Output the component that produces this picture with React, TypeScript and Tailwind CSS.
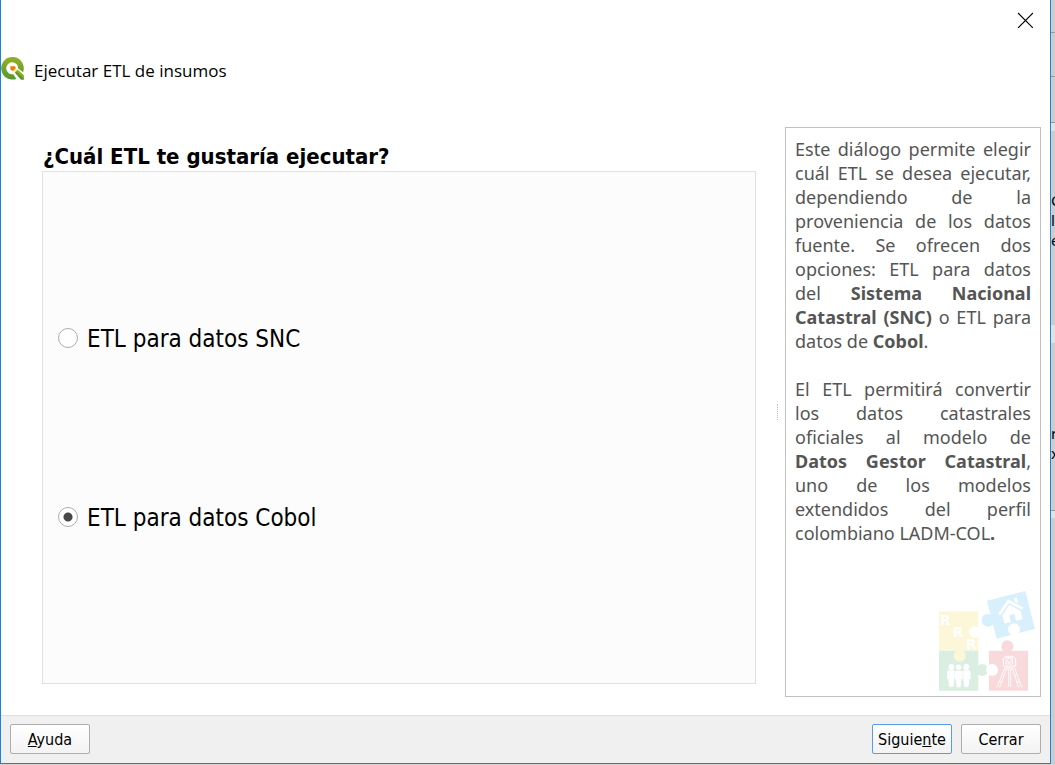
import { useState } from "react";

const QgisLogo = () => (
  <svg viewBox="0 0 24 24" className="h-6 w-6 shrink-0" aria-hidden="true">
    <defs>
      <linearGradient id="ring" x1="0" y1="0" x2="0" y2="1">
        <stop offset="0" stopColor="#93b023" />
        <stop offset="1" stopColor="#589632" />
      </linearGradient>
    </defs>
    <path
      fill="url(#ring)"
      d="M15.4 21.900A11.300 11.300 0 1 1 22.100 15.200L17.200 11.600A6 6 0 1 0 12.400 17.200Z"
    />
    <path fill="#f5ec8a" d="M11.8 13.800L14.600 11L17.400 13.600L14.600 16.400Z" />
    <path fill="#589632" d="M13.900 15.700L16 13.500L22.900 20V22.800H20Z" />
    <path fill="#93b023" d="M15.200 14.300L16.900 12.700L22.900 18.200V21.400Z" />
    <path fill="#ee7913" d="M9.300 9.300H14.300L14.600 11.200L12 13.900L9.500 12.800Z" />
  </svg>
);

const Person = ({ x, y }: { x: number; y: number }) => (
  <g transform={`translate(${x} ${y})`}>
    <circle cx="0" cy="0" r="9" />
    <path d="M-8 10H8Q13 11 13 18V36H9L7 58Q0 63 -7 58L-9 36H-13V18Q-13 11 -8 10Z" />
  </g>
);

const PuzzleLogo = () => (
  <svg viewBox="57 30 288 303" className="h-[101px] w-24" role="img" aria-label="LADM-COL">
    <path fill="#fdf7da" d="M57 94H175V212H57Z" />
    <path fill="#daeee1" d="M57 212H175V332H57Z" />
    <circle cx="187" cy="270" r="18" fill="#daeee1" />
    <circle cx="119" cy="227" r="18" fill="#fdf7da" />
    <circle cx="164" cy="156" r="17" fill="#fff" />
    <path fill="#f9dadc" d="M207 212H324V332H207Z" />
    <circle cx="262" cy="199" r="18" fill="#f9dadc" />
    <circle cx="216" cy="270" r="18" fill="#fff" />
    <path fill="#d8f0fb" d="M201 62L316 33L345 147L230 176Z" />
    <circle cx="204" cy="121" r="19" fill="#d8f0fb" />
    <circle cx="282" cy="148" r="18" fill="#fff" />
    <path fill="#fff" d="M267 165L299 157L302 166H268Z" />
    <g fill="#fff" fontFamily="DejaVu Sans, sans-serif" fontWeight="700" fontSize="40">
      <text x="61" y="135">R</text>
      <text x="99" y="171">R</text>
      <text x="138" y="207">R</text>
    </g>
    <g fill="#fff">
      <Person x={94} y={261} />
      <Person x={139} y={261} />
      <g stroke="#daeee1" strokeWidth="1.5">
        <Person x={116} y={262} />
      </g>
    </g>
    <g transform="rotate(-14 272 90)" fill="#fff">
      <path d="M233 92L272 57L311 92L306 98L272 68L238 98Z" />
      <path d="M290 58H299V76L290 68Z" />
      <path d="M272 74L300 99V125H280V104H264V125H244V99Z" />
    </g>
    <g fill="none" stroke="#fff" strokeWidth="2.5">
      <path d="M257 229H280L287 236V258H250V236ZM250 234V258M287 234V258" />
      <rect x="258" y="233" width="20" height="19" />
      <circle cx="268" cy="242" r="6" />
      <path d="M253 262H284M257 267H280" />
      <path d="M254 264L231 322M259 267L239 322M266 267V320M272 267V320M278 267L296 322M284 264L305 322" />
      <path d="M247 285L255 288M282 288L290 285M239 304L247 307M289 307L297 304" />
    </g>
  </svg>
);

const dialogButton =
  "h-[30px] w-20 rounded-[2px] border bg-gradient-to-b from-white to-[#f3f3f3] pt-[2px] text-center font-['DejaVu_Sans_Condensed','DejaVu_Sans',sans-serif] text-[16px] leading-6 font-normal text-black";

const options = [
  { id: "snc", label: "ETL para datos SNC" },
  { id: "cobol", label: "ETL para datos Cobol" },
];

export default function App() {
  const [source, setSource] = useState("cobol");

  return (
    <div className="flex min-h-screen bg-[#d2d2d2] pb-px font-['Noto_Sans',sans-serif] text-black">
      <div
        role="dialog"
        aria-labelledby="dialog-title"
        className="flex min-w-0 flex-1 flex-col border-x border-b border-[#1883d7] bg-white"
      >
        <header className="shrink-0">
          <div className="flex h-10 justify-end pr-4">
            <button type="button" aria-label="Cerrar ventana" className="flex h-10 w-[18px] items-center justify-center">
              <svg viewBox="0 0 16 16" className="h-4 w-4" fill="none" stroke="#000" strokeWidth="1.1">
                <path d="M1 1l15 15M16 1l-15 15" />
              </svg>
            </button>
          </div>
          <div className="flex h-[60px] items-start gap-[9px] pt-[17px]">
            <QgisLogo />
            <h1 id="dialog-title" className="font-['Open_Sans',sans-serif] text-[17px] leading-7">
              Ejecutar ETL de insumos
            </h1>
          </div>
        </header>

        <main className="flex flex-1 pt-[27px] pr-[9px] pb-[18px] pl-[41px]">
          <fieldset className="flex min-w-0 flex-1 flex-col pb-[13px]">
            <legend className="float-left w-full pt-4 pl-px font-['DejaVu_Sans_Condensed','DejaVu_Sans',sans-serif] text-[22px] leading-7 font-bold">
              ¿Cuál ETL te gustaría ejecutar?
            </legend>
            <div className="flex flex-1 flex-col justify-evenly border border-[#e0e0e0] bg-[#fcfcfc] pl-[15px]">
              {options.map((option) => (
                <label
                  key={option.id}
                  className="flex items-center gap-[9px] font-['DejaVu_Sans_Condensed','DejaVu_Sans',sans-serif] text-[24px] leading-[26px]"
                >
                  <input
                    type="radio"
                    name="source"
                    value={option.id}
                    checked={source === option.id}
                    onChange={() => setSource(option.id)}
                    className="h-5 w-5 shrink-0 appearance-none rounded-full border border-[#adadad] bg-white checked:bg-[radial-gradient(circle,#484848_4px,#ffffff_5px)]"
                  />
                  <span className="pt-[2px]">{option.label}</span>
                </label>
              ))}
            </div>
          </fieldset>

          <div className="flex w-[29px] shrink-0 items-center justify-end pr-[7px]">
            <div className="h-4 border-l border-dotted border-[#bdbdbd]" />
          </div>

          <aside className="flex w-64 shrink-0 flex-col border border-[#c0c0c0] px-[9px] pt-[9px] pb-[5px] text-justify text-[18px] leading-6 text-[#555]">
            <p>
              Este diálogo permite elegir cuál ETL se desea ejecutar, dependiendo de la proveniencia de los datos
              fuente. Se ofrecen dos opciones: ETL para datos del{" "}
              <b className="font-bold">Sistema Nacional Catastral (SNC)</b> o ETL para datos de{" "}
              <b className="font-bold">Cobol</b>.
            </p>
            <p className="mt-6">
              El ETL permitirá convertir los datos catastrales oficiales al modelo de{" "}
              <b className="font-bold">Datos Gestor Catastral</b>, uno de los modelos extendidos del perfil
              colombiano LADM-COL<b className="font-bold">.</b>
            </p>
            <div className="-mr-1 mt-auto flex justify-end">
              <PuzzleLogo />
            </div>
          </aside>
        </main>

        <footer className="flex h-12 shrink-0 items-start gap-[9px] border-t border-[#dfdfdf] bg-[#f0f0f0] px-[9px] pt-2">
          <button type="button" className={`${dialogButton} mr-auto border-[#adadad]`}>
            <span className="underline">A</span>yuda
          </button>
          <button type="button" className={`${dialogButton} border-[#569de5]`}>
            Siguie<span className="underline">n</span>te
          </button>
          <button type="button" className={`${dialogButton} border-[#adadad]`}>
            Cerrar
          </button>
        </footer>
      </div>

      <div
        aria-hidden="true"
        className="flex w-1 shrink-0 flex-col overflow-hidden bg-[#cdcdcd] text-[15px] leading-5"
      >
        <div className="h-[33px] shrink-0 border-b border-[#999]" />
        <div className="h-11 shrink-0 border-b border-[#999]" />
        <div className="h-[46px] shrink-0 border-b border-[#999]" />
        <div className="h-2 shrink-0 bg-[#e2e2e2]" />
        <div className="shrink-0 pt-[59px]">
          <div>C</div>
          <div>l</div>
          <div>e</div>
        </div>
        <div className="mt-[75px] h-[18px] shrink-0 bg-[#e2e2e2]" />
        <div className="shrink-0 pt-20">
          <div>r</div>
          <div>x</div>
        </div>
        <div className="mt-[47px] h-2 shrink-0 border-t border-[#999] bg-[#e2e2e2]" />
      </div>
    </div>
  );
}
